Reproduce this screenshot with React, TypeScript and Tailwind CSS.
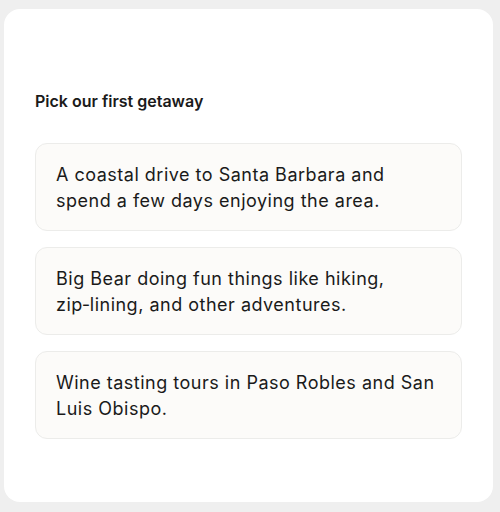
const OPTIONS = [
  'A coastal drive to Santa Barbara and spend a few days enjoying the area.',
  'Big Bear doing fun things like hiking, zip\u2011lining, and other adventures.',
  'Wine tasting tours in Paso Robles and San Luis Obispo.',
]

export default function App() {
  return (
    <div
      className="min-h-[512px] bg-[#efefef] pl-[4px] pr-[7px] pt-[9px] pb-[10px]"
      style={{ fontFamily: 'Inter, "Noto Sans", sans-serif' }}
    >
      <div className="h-[493px] rounded-[16px] bg-white px-[31px] pt-[80px]">
        <h2 className="text-[16px] font-semibold leading-[24px] text-[#1a1a1a]">
          Pick our first getaway
        </h2>
        <div className="mt-[30px] flex flex-col gap-[16px]">
          {OPTIONS.map((o) => (
            <button
              key={o}
              className="rounded-[12px] border border-[#ececea] bg-[#fcfbf9] px-[20px] pt-[18px] pb-[16px] text-left text-[18px] leading-[26px] tracking-[0.5px] text-[#1a1a1a]"
            >
              {o}
            </button>
          ))}
        </div>
      </div>
    </div>
  )
}
